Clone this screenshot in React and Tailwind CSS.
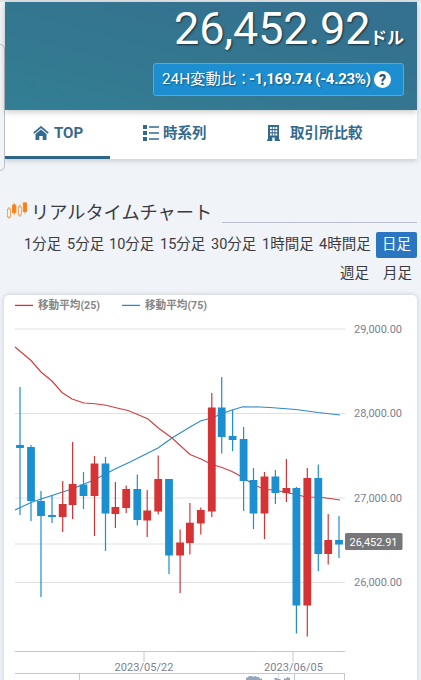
import React from "react";

const RED = "#d63434";
const BLUE = "#1c8fd0";

// [center x, high, low, body top, body bottom, rising]
const candles = [
  [20, 387, 515, 445, 448, 0],
  [31, 445, 521, 447, 501, 0],
  [41, 491, 597, 501, 516, 0],
  [52, 495, 523, 515, 517, 0],
  [62.7, 481, 532, 504, 517, 1],
  [72.6, 442, 519, 484, 505, 1],
  [83.5, 472, 509, 484.5, 496, 0],
  [94.5, 456, 536, 463.5, 496, 1],
  [105.5, 457, 551, 463.5, 513.5, 0],
  [115.4, 482, 528, 507, 514, 1],
  [126.2, 485.5, 513, 489, 508, 1],
  [137.3, 474.5, 525.5, 489, 520, 0],
  [147.2, 490, 537, 510.5, 520.5, 1],
  [158.2, 455.5, 514.5, 479, 511.5, 1],
  [169, 479, 574, 479, 555.5, 0],
  [180.1, 529.5, 593, 542.5, 555.5, 1],
  [189.9, 503, 554.5, 522.7, 543, 1],
  [200.8, 507.5, 534.5, 510, 523.5, 1],
  [211.8, 393, 517, 407.5, 511.5, 1],
  [221.7, 377, 453.5, 407.5, 437, 0],
  [232.6, 410, 451, 436, 440, 0],
  [243.6, 427, 511, 439, 481, 0],
  [253.5, 468, 529, 480, 513.5, 0],
  [264.5, 472, 539, 476.5, 513.5, 1],
  [275.4, 470, 504, 476.5, 493, 0],
  [286.4, 459, 502, 488, 493, 1],
  [296.4, 487, 633.5, 488, 605.5, 0],
  [307.3, 468, 636.5, 478, 605.5, 1],
  [318.3, 464.5, 571, 478, 554, 0],
  [328.2, 514, 564.5, 540, 554, 1],
  [339, 516, 558, 540, 544.5, 0],
];

const ma25 =
  "15,347 31,360.5 41,372 52,381 62,392.5 72,399 84,403 95,403.8 106,405.3 117,408 128,410.5 140,415.5 148,419 159,428.5 172,438 190,454.5 201,459 212,464.5 222,467.5 232,471.5 243,477.5 254,485 265,489.5 275,490 286,492.5 296,494.5 306,497 320,497.3 330,498.5 340,500";
const ma75 =
  "15,510 31,502.5 41,499 72,489 94,480 115,469 130,462 148,453 158,448 172,438 190,427 201,420.8 212,418 221,414 232,410 243,406.8 260,407 270,407.5 296,409.5 307,411 318,412.5 340,415";

function HomeIcon() {
  return (
    <svg width="16" height="14" viewBox="0 0 16 14" fill="none">
      <path d="M0.8 7.2 8 1 15.2 7.2" stroke="#356a8f" strokeWidth="1.7" />
      <path d="M2.5 8 8 3.4 13.5 8V14H9.7V10H6.3V14H2.5Z" fill="#356a8f" />
    </svg>
  );
}

function ListIcon() {
  return (
    <svg width="16" height="16" viewBox="0 0 16 16" fill="#356a8f">
      <path d="M0 0h4v4H0zM0 6h4v4H0zM0 12h4v4H0zM6 1.2h10v1.6H6zM6 7.2h10v1.6H6zM6 13.2h10v1.6H6z" />
    </svg>
  );
}

function BuildingIcon() {
  return (
    <svg width="13" height="16" viewBox="0 0 13 16">
      <path
        fill="#356a8f"
        fillRule="evenodd"
        d="M1 0h11v14.5h1V16H7.7V12.5H5.3V16H0V14.5H1ZM3 2v2h1.8V2ZM5.7 2v2h1.8V2ZM8.4 2v2h1.8V2ZM3 5.2v2h1.8v-2ZM5.7 5.2v2h1.8v-2ZM8.4 5.2v2h1.8v-2ZM3 8.5v2h1.8v-2ZM5.7 8.5v2h1.8v-2ZM8.4 8.5v2h1.8v-2Z"
      />
    </svg>
  );
}

function CandleIcon() {
  return (
    <svg width="20" height="17" viewBox="0 0 20 17" stroke="#f5861f">
      <path d="M2 5v12M7.2 1v12M12.8 2.5v12.5M18 0v12" strokeWidth="0.8" />
      <rect x="0.5" y="7" width="3" height="8" fill="#f0f3f7" strokeWidth="0.7" />
      <rect x="5.6" y="3" width="3.2" height="7.5" fill="#f5800e" />
      <rect x="11.3" y="5" width="3" height="8" fill="#f0f3f7" strokeWidth="0.7" />
      <rect x="16.3" y="1" width="3.2" height="8.5" fill="#f5800e" />
    </svg>
  );
}

function Chart() {
  return (
    <svg
      width="413"
      height="385"
      viewBox="4 295 413 385"
      className="block"
      fontFamily="Roboto, 'Noto Sans CJK JP', sans-serif"
      fontSize="11"
    >
      <path d="M15 305.4H33" stroke={RED} strokeWidth="1.3" />
      <path d="M122 305.4H140" stroke={BLUE} strokeWidth="1.3" />
      <g fill="#858585" fontWeight="bold">
        <text x="38" y="309" textLength="62" lengthAdjust="spacingAndGlyphs">移動平均(25)</text>
        <text x="145" y="309" textLength="62" lengthAdjust="spacingAndGlyphs">移動平均(75)</text>
      </g>
      <path
        d="M15 329H345M15 413.5H345M15 498H345M15 544H345M15 582.5H345"
        stroke="#dfe1e5"
        fill="none"
      />
      <path d="M15 651.5H345M144 652V662M293 652V662M15 673.5H345M79.5 674V680M294.5 674V680M344.5 674V680" stroke="#c3c8d5" fill="none" />
      <path d="M278.5 674V680" stroke="#d9e1ec" />
      <path
        d="M246 680V678L248 677L249 676H252L253 677L255 676L257 677H259L260 679L262 678V680ZM274 678H277L278 679H280L281 680H275ZM284 678L286 679L287 677L290 678V680H284Z"
        fill="#93a7bf"
      />
      <polyline points={ma25} fill="none" stroke="#ce3f42" strokeWidth="1.15" />
      <polyline points={ma75} fill="none" stroke="#2f8bc5" strokeWidth="1.15" />
      {candles.map(([x, high, low, top, bottom, up]) => (
        <g key={x} fill={up ? RED : BLUE}>
          <rect x={x - 0.6} y={high} width="1.2" height={low - high} />
          <rect x={x - 3.9} y={top} width="7.8" height={bottom - top} />
        </g>
      ))}
      <g fill="#7b7f91">
        <text x="354" y="332.5" textLength="48">29,000.00</text>
        <text x="354" y="416.5" textLength="48">28,000.00</text>
        <text x="354" y="501.5" textLength="48">27,000.00</text>
        <text x="354" y="585.5" textLength="48">26,000.00</text>
        <text x="114.5" y="671" textLength="59">2023/05/22</text>
        <text x="264" y="671" textLength="59">2023/06/05</text>
      </g>
      <rect x="345" y="533" width="57.5" height="17" rx="1.5" fill="#77777a" />
      <text x="349.5" y="545.5" textLength="48" fill="#fff">26,452.91</text>
    </svg>
  );
}

const label = "block whitespace-nowrap";

export default function App() {
  return (
    <div className="relative flex h-[680px] w-[421px] flex-col overflow-hidden bg-[#f0f3f7] pt-[2px] pr-1 pl-[5px] font-[family-name:Roboto,'Noto_Sans_CJK_JP',sans-serif] text-[#3b3b3f]">
      <div className="absolute -left-2 top-11 h-[127px] w-[13px] rounded-[5px] border border-[#b9bec5] bg-[#f2f4f6]" />
      <div className="absolute left-0 top-0 h-[2px] w-full bg-[#dfe3e6]" />
      <header className="relative z-10 h-[108px] shrink-0 bg-linear-to-tr from-[#327f93] via-[#34758f] via-55% to-[#346f8f] pr-[13px] shadow-[0_2px_6px_rgba(0,0,0,0.22)]">
        <div className="flex h-[61px] items-baseline justify-end pt-px text-white [text-shadow:1px_1px_2px_rgba(0,0,0,0.6)]">
          <span className="w-[196px] whitespace-nowrap text-[45px] leading-[52px] tracking-[-0.15px]">26,452.92</span>
          <span className="w-[34px] whitespace-nowrap text-[17px] font-bold">ドル</span>
        </div>
        <div className="ml-auto flex h-[33px] w-[251px] items-center rounded-[3px] border border-[#51a9dc] bg-[#1d8fd1] pl-[8px] text-[16px] text-white [text-shadow:1px_1px_2px_rgba(0,0,0,0.45)]">
          <span className="w-[87px] whitespace-nowrap text-[15.3px]">24H変動比：</span>
          <span className="w-[125px] whitespace-nowrap text-[15px] font-bold tracking-[-0.3px]">-1,169.74 (-4.23%)</span>
          <span className="flex size-[17px] items-center justify-center rounded-full bg-white text-[14px] font-black leading-none text-[#23597e] [text-shadow:none]">?</span>
        </div>
      </header>
      <nav className="flex h-[49px] shrink-0 bg-white text-[15px] font-bold text-[#356a8f] shadow-[0_2px_5px_rgba(0,0,0,0.16)]">
        <div className="flex w-[105px] items-center gap-[5px] border-b-[3.5px] border-[#2f6587] pl-7">
          <HomeIcon />
          <span className="pt-px">TOP</span>
        </div>
        <div className="flex w-[155px] items-center gap-1 pb-[4px] pl-[33px]">
          <ListIcon />
          <span className="pt-[2px] text-[14.5px]">時系列</span>
        </div>
        <div className="flex items-center gap-[10px] pb-[4px] pl-[2px]">
          <BuildingIcon />
          <span className="pt-[2px] text-[14.5px]">取引所比較</span>
        </div>
      </nav>
      <h2 className="mt-[40px] flex h-[27px] shrink-0 items-center pl-[2px] text-[18px]">
        <span className="mb-[5px]"><CandleIcon /></span>
        <span className="ml-1 w-[191px] whitespace-nowrap text-[18.2px] leading-[27px]">リアルタイムチャート</span>
        <span className="mt-[20px] h-px grow bg-[#b9bdcc]" />
      </h2>
      <div className="mt-[5px] flex h-[28px] shrink-0 items-center pl-[19px] text-[14.5px]">
        <span className={label + " w-[43px]"}>1分足</span>
        <span className={label + " w-[42px]"}>5分足</span>
        <span className={label + " w-[51px]"}>10分足</span>
        <span className={label + " w-[51px]"}>15分足</span>
        <span className={label + " w-[51px]"}>30分足</span>
        <span className={label + " w-[57px]"}>1時間足</span>
        <span className={label + " w-[57px]"}>4時間足</span>
        <span className="flex h-[26px] w-[41px] items-center justify-center whitespace-nowrap rounded-[2px] bg-[#2a76c0] text-white">日足</span>
      </div>
      <div className="mt-px flex h-[28px] shrink-0 items-center justify-end gap-[14px] pr-[5px] text-[14.5px]">
        <span>週足</span>
        <span>月足</span>
      </div>
      <div className="-ml-px mt-[7px] h-[400px] w-[413px] shrink-0 rounded-[5px] bg-white shadow-[0_0_4px_rgba(60,70,110,0.25)]">
        <Chart />
      </div>
    </div>
  );
}
